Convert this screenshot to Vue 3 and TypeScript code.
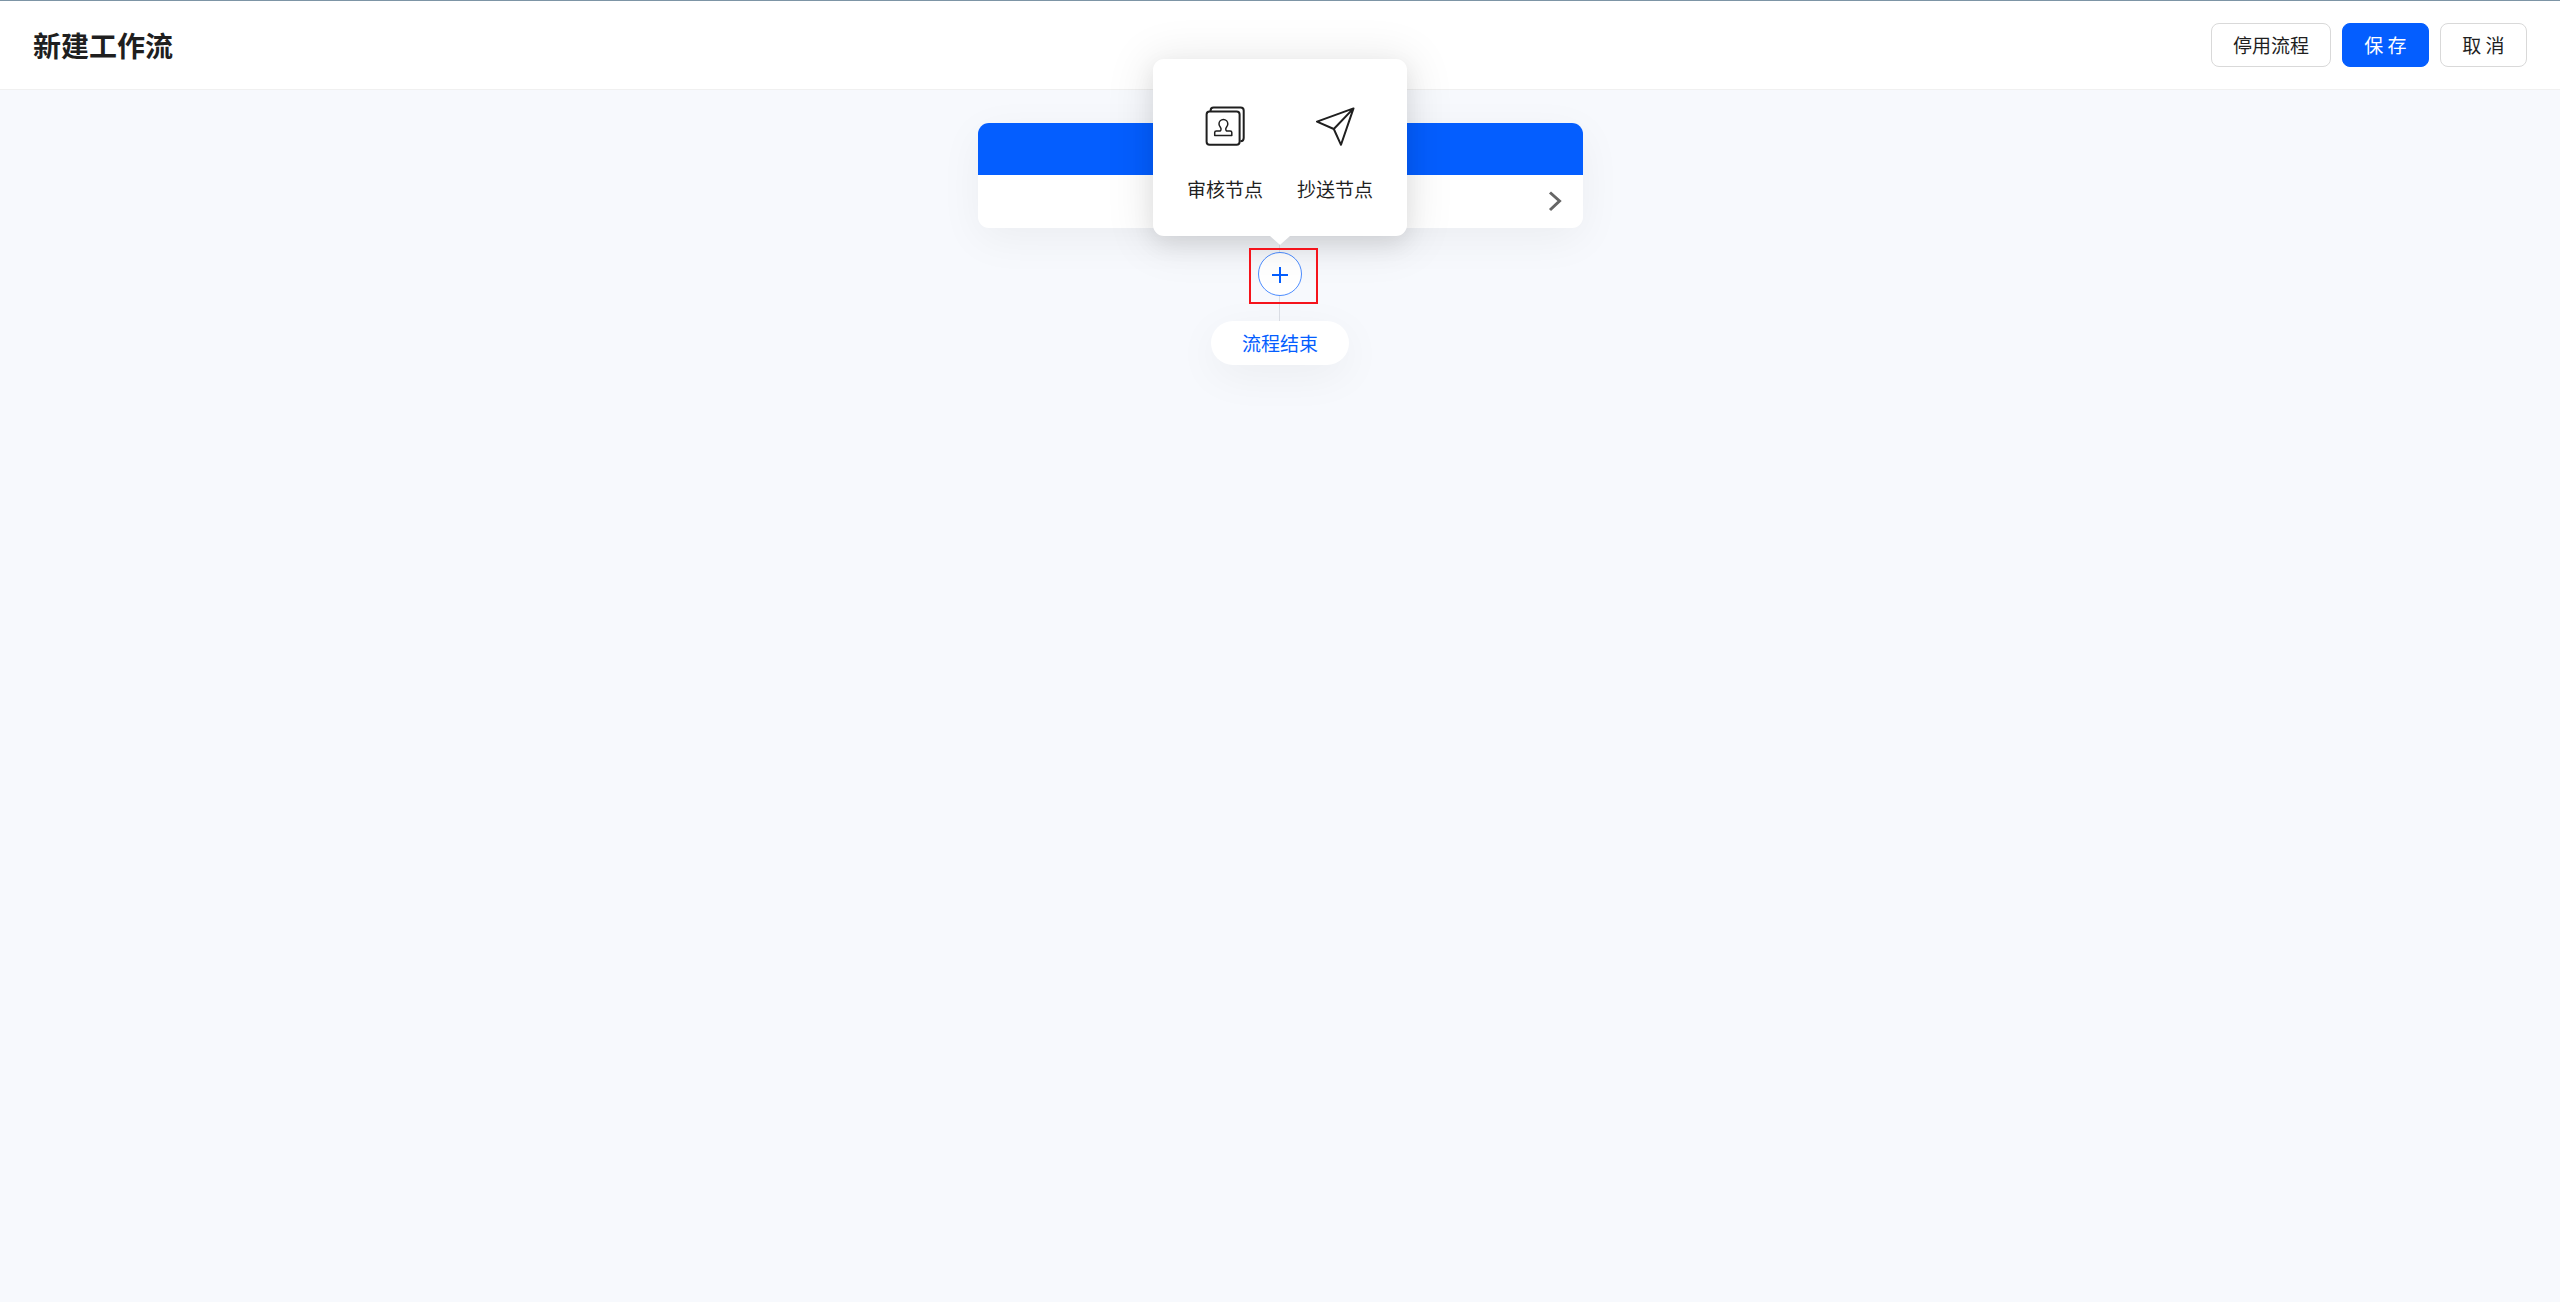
<script setup lang="ts">
import { ref } from 'vue'

interface NodeType {
  key: 'review' | 'copy'
  label: string
}

const nodeTypes: NodeType[] = [
  { key: 'review', label: '审核节点' },
  { key: 'copy', label: '抄送节点' },
]

const menuOpen = ref<boolean>(true)
</script>

<template>
  <div class="page">
    <header class="topbar">
      <h1 class="title">新建工作流</h1>
      <div class="actions">
        <button type="button" class="btn">停用流程</button>
        <button type="button" class="btn primary">保 存</button>
        <button type="button" class="btn">取 消</button>
      </div>
    </header>

    <main class="flow">
      <section class="card">
        <div class="card-head"></div>
        <button type="button" class="card-body" aria-label="编辑节点">
          <svg class="chevron" viewBox="0 0 14 22" aria-hidden="true">
            <path d="M2 1.5 L11.5 10 L2 19" />
          </svg>
        </button>
      </section>

      <div class="connector">
        <div class="add">
          <button
            type="button"
            class="add-btn"
            aria-label="添加节点"
            :aria-expanded="menuOpen"
            @click="menuOpen = !menuOpen"
          >
            <svg viewBox="0 0 18 18" aria-hidden="true">
              <path d="M9 2 V18 M1 10 H17" />
            </svg>
          </button>
          <span class="highlight"></span>
          <div v-if="menuOpen" class="menu">
            <button v-for="n in nodeTypes" :key="n.key" type="button" class="menu-item">
              <svg v-if="n.key === 'review'" class="icon" viewBox="0 0 40 40" aria-hidden="true">
                <rect x="1.6" y="5.6" width="33" height="33.2" rx="3" />
                <path d="M5.6 5 V4.5 Q5.6 1.6 8.6 1.6 H35.6 Q38.7 1.6 38.7 4.6 V32 Q38.7 35.2 35.4 35.2" />
                <path
                  class="thin"
                  d="M9.7 29.6 V26.6 Q9.7 25 11.4 25 H14.2 Q16.3 25 16 22.7 C15.8 21.3 14 20 14 17.9 A4.4 4.4 0 0 1 22.8 17.9 C22.8 20 21 21.3 20.8 22.7 Q20.5 25 22.6 25 H25.1 Q26.8 25 26.8 26.6 V29.6 Z"
                />
              </svg>
              <svg v-else class="icon" viewBox="0 0 40 40" aria-hidden="true">
                <path d="M38.5 2.4 L2 15.6 L18.8 23 L26 38.8 Z M38.5 2.4 L18.8 23" />
              </svg>
              <span>{{ n.label }}</span>
            </button>
          </div>
        </div>
      </div>

      <div class="end">流程结束</div>
    </main>
  </div>
</template>

<style>
body {
  margin: 0;
  background: #f7f9fd;
}
</style>

<style scoped>
.page {
  min-height: 100vh;
  box-sizing: border-box;
  border-top: 1px solid #7d95a6;
  background: #f7f9fd;
  color: #1f1f1f;
  font-family: "Noto Sans CJK SC", sans-serif;
  font-size: 19px;
  font-weight: 400;
  line-height: 28px;
}
button {
  font: inherit;
  color: inherit;
  margin: 0;
  padding: 0;
  border: 0;
  background: none;
  cursor: pointer;
}
svg {
  display: block;
  fill: none;
  stroke: currentColor;
}
.topbar {
  display: flex;
  align-items: center;
  justify-content: space-between;
  height: 88px;
  padding: 0 33px;
  background: #fff;
  border-bottom: 1px solid #f0f0f0;
}
.title {
  margin: 0;
  font-size: 28px;
  font-weight: 700;
  line-height: 40px;
}
.actions {
  display: flex;
  gap: 11px;
}
.btn {
  height: 44px;
  padding: 0 21px;
  min-width: 87px;
  border: 1px solid #d9d9d9;
  border-radius: 8px;
  background: #fff;
}
.btn.primary {
  border-color: #045eff;
  background: #045eff;
  color: #fff;
}
.flow {
  display: flex;
  flex-direction: column;
  align-items: center;
  padding-top: 33px;
}
.card {
  width: 605px;
  border-radius: 11px;
  overflow: hidden;
  background: #fff;
  box-shadow: 0 11px 44px rgba(0, 0, 0, 0.05);
}
.card-head {
  height: 52px;
  background: #045eff;
}
.card-body {
  display: flex;
  align-items: center;
  justify-content: flex-end;
  width: 100%;
  height: 53px;
  padding-right: 21px;
}
.chevron {
  width: 14px;
  height: 22px;
  color: #666;
  stroke-width: 3;
}
.connector {
  box-sizing: border-box;
  height: 93px;
  padding-top: 24px;
  background: linear-gradient(#dcdfe6, #dcdfe6) 21px 0 / 1px 100% no-repeat;
}
.add {
  position: relative;
}
.add-btn {
  display: flex;
  align-items: center;
  justify-content: center;
  width: 44px;
  height: 44px;
  border: 1px solid #4d8dff;
  border-radius: 50%;
  background: #fff;
  color: #045eff;
}
.add-btn svg {
  width: 18px;
  height: 18px;
  stroke-width: 2;
}
.highlight {
  position: absolute;
  z-index: 3;
  top: -4px;
  left: -9px;
  width: 65px;
  height: 52px;
  border: 2px solid #f5141c;
  pointer-events: none;
}
.menu {
  position: absolute;
  z-index: 2;
  bottom: calc(100% + 16px);
  left: 50%;
  transform: translateX(-50%);
  display: flex;
  gap: 32px;
  padding: 47px 33px 33px;
  border-radius: 11px;
  background: #fff;
  box-shadow: 0 8px 22px rgba(0, 0, 0, 0.08), 0 4px 44px 8px rgba(0, 0, 0, 0.08);
}
.menu::after {
  content: "";
  position: absolute;
  top: 100%;
  left: 50%;
  width: 20px;
  height: 9px;
  margin-left: -10px;
  background: #fff;
  clip-path: polygon(0 0, 100% 0, 55% 90%, 50% 100%, 45% 90%);
}
.menu-item {
  display: flex;
  flex-direction: column;
  align-items: center;
  gap: 29px;
  min-width: 78px;
  white-space: nowrap;
}
.icon {
  width: 40px;
  height: 40px;
  stroke-width: 2;
  stroke-linejoin: round;
}
.thin {
  stroke-width: 1.5;
}
.end {
  padding: 8px 31px;
  border-radius: 22px;
  background: #fff;
  color: #045eff;
  box-shadow: 0 11px 44px rgba(0, 0, 0, 0.05);
}
</style>
